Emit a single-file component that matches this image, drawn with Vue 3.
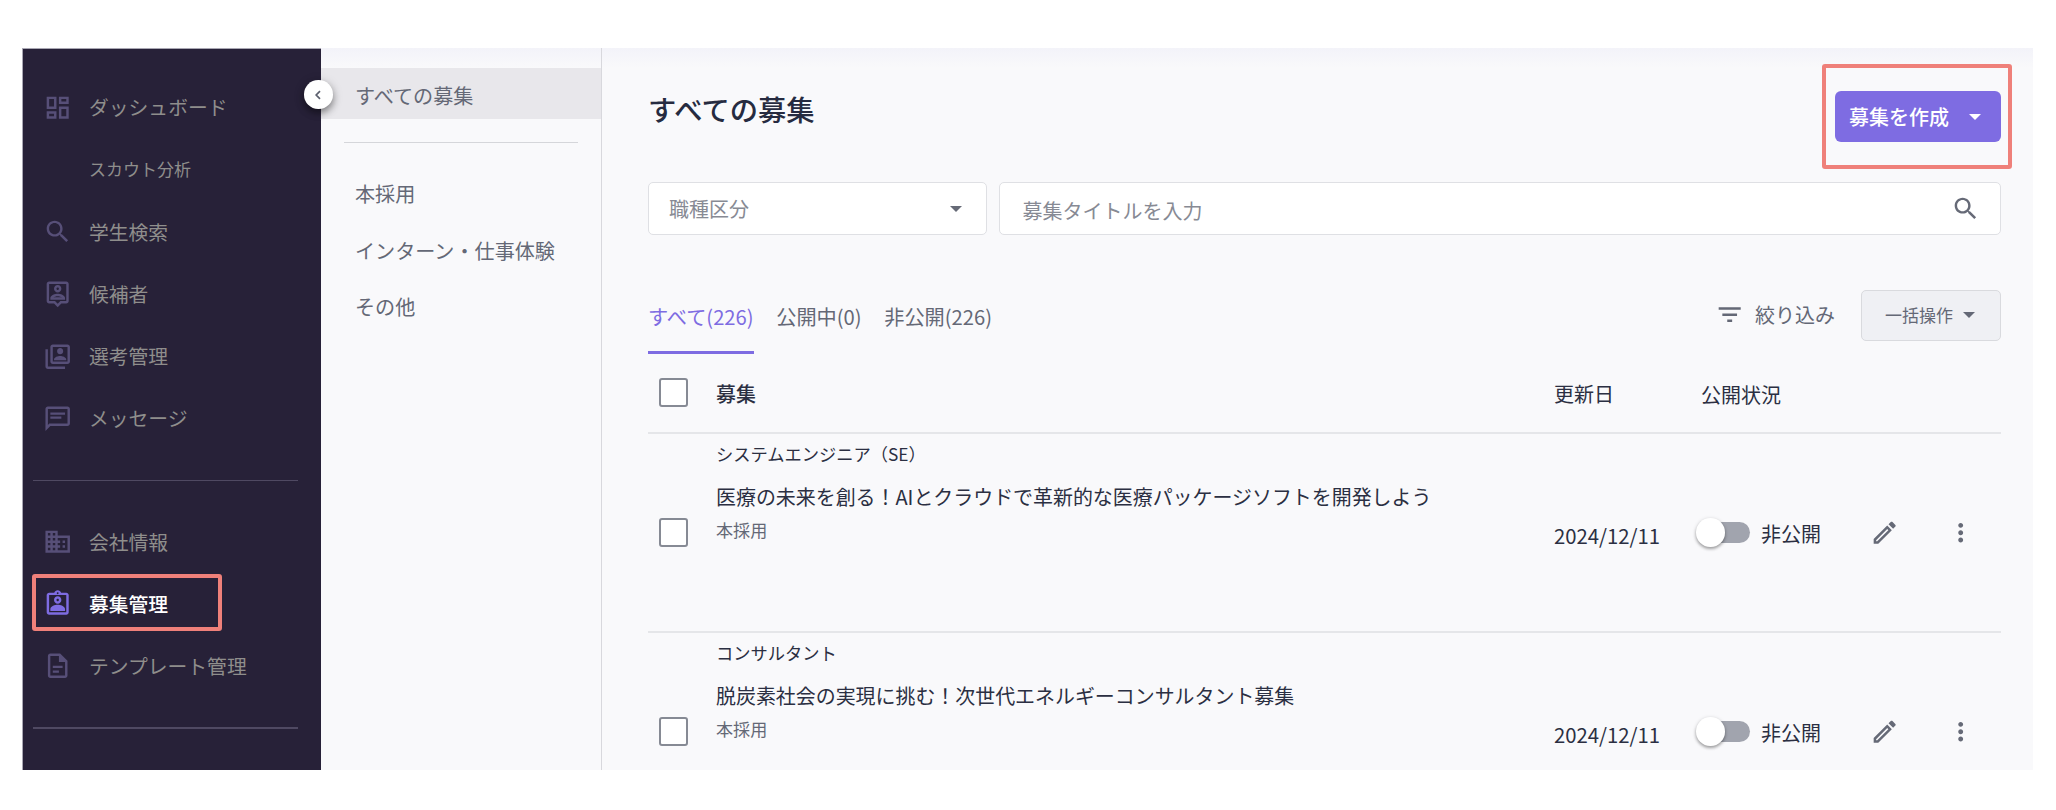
<script setup>
const icons = {
  dashboard: 'M19 5v2h-4V5h4M9 5v6H5V5h4m10 8v6h-4v-6h4M9 17v2H5v-2h4M21 3h-8v6h8V3zM11 3H3v10h8V3zm10 8h-8v10h8V11zm-10 4H3v6h8v-6z',
  search: 'M15.5 14h-.79l-.28-.27C15.41 12.59 16 11.11 16 9.5 16 5.91 13.09 3 9.5 3S3 5.91 3 9.5 5.91 16 9.5 16c1.61 0 3.09-.59 4.23-1.57l.27.28v.79l5 4.99L20.49 19l-4.99-5zm-6 0C7.01 14 5 11.99 5 9.5S7.01 5 9.5 5 14 7.01 14 9.5 11.99 14 9.5 14z',
  candidate: 'M19 2H5c-1.1 0-2 .9-2 2v14c0 1.1.9 2 2 2h4l3 3 3-3h4c1.1 0 2-.9 2-2V4c0-1.1-.9-2-2-2zm0 16h-4.83l-.59.59L12 20.17l-1.59-1.59-.58-.58H5V4h14v14zM12 11c1.65 0 3-1.35 3-3s-1.35-3-3-3-3 1.35-3 3 1.35 3 3 3zm0-4c.55 0 1 .45 1 1s-.45 1-1 1-1-.45-1-1 .45-1 1-1zm6 8.58c0-2.5-3.97-3.58-6-3.58s-6 1.08-6 3.58V17h12v-1.42zM8.48 15c.74-.51 2.23-1 3.52-1s2.79.49 3.52 1H8.48z',
  selection: 'M4 6H2v14c0 1.1.9 2 2 2h14v-2H4V6zm16-4H8c-1.1 0-2 .9-2 2v12c0 1.1.9 2 2 2h12c1.1 0 2-.9 2-2V4c0-1.1-.9-2-2-2zm0 14H8V4h12v12zm-6-6c1.38 0 2.5-1.12 2.5-2.5S15.38 5 14 5s-2.5 1.12-2.5 2.5S12.62 10 14 10zm5 4.5c0-2.1-3.3-3-5-3s-5 .9-5 3v.5h10v-.5z',
  message: 'M4 4h16v12H5.17L4 17.17V4m0-2c-1.1 0-1.99.9-1.99 2L2 22l4-4h14c1.1 0 2-.9 2-2V4c0-1.1-.9-2-2-2H4zm2 8.200h9v1.800H6v-1.800zm0-3.200h12v1.800H6V7z',
  company: 'M12 7V3H2v18h20V7H12zM6 19H4v-2h2v2zm0-4H4v-2h2v2zm0-4H4V9h2v2zm0-4H4V5h2v2zm4 12H8v-2h2v2zm0-4H8v-2h2v2zm0-4H8V9h2v2zm0-4H8V5h2v2zm10 12h-8v-2h2v-2h-2v-2h2v-2h-2V9h8v10zm-2-8h-2v2h2v-2zm0 4h-2v2h2v-2z',
  job: 'M19 3h-4.18C14.4 1.84 13.3 1 12 1s-2.4.84-2.82 2H5c-1.1 0-2 .9-2 2v14c0 1.1.9 2 2 2h14c1.1 0 2-.9 2-2V5c0-1.1-.9-2-2-2zm-7-.25c.41 0 .75.34.75.75s-.34.75-.75.75-.75-.34-.75-.75.34-.75.75-.75zM19 19H5V5h14v14zM12 6c-1.65 0-3 1.35-3 3s1.35 3 3 3 3-1.35 3-3-1.35-3-3-3zm0 4c-.55 0-1-.45-1-1s.45-1 1-1 1 .45 1 1-.45 1-1 1zm-6 6.47V18h12v-1.53c0-2.5-3.97-3.58-6-3.58s-6 1.07-6 3.58z',
  template: 'M14 2H6c-1.1 0-2 .9-2 2v16c0 1.1.89 2 1.99 2H18c1.1 0 2-.9 2-2V8l-6-6zM6 20V4h7v5h5v11H6zm2-4h5v1.8H8V16zm0-4h8v1.8H8V12z',
  filter: 'M10 18h4v-2h-4v2zM3 6v2h18V6H3zm3 7h12v-2H6v2z',
  edit: 'M14.06 9.02l.92.92L5.92 19H5v-.92l9.06-9.06M17.66 3c-.25 0-.51.1-.7.29l-1.83 1.83 3.75 3.75 1.83-1.83c.39-.39.39-1.02 0-1.41l-2.34-2.34c-.2-.2-.45-.29-.71-.29zm-3.6 3.19L3 17.25V21h3.75L17.81 9.94l-3.75-3.75z',
  more: 'M12 8c1.1 0 2-.9 2-2s-.9-2-2-2-2 .9-2 2 .9 2 2 2zm0 2c-1.1 0-2 .9-2 2s.9 2 2 2 2-.9 2-2-.9-2-2-2zm0 6c-1.1 0-2 .9-2 2s.9 2 2 2 2-.9 2-2-.9-2-2-2z',
}

const primaryNav = [
  { label: 'ダッシュボード', icon: 'dashboard' },
  { label: 'スカウト分析', sub: true },
  { label: '学生検索', icon: 'search' },
  { label: '候補者', icon: 'candidate' },
  { label: '選考管理', icon: 'selection' },
  { label: 'メッセージ', icon: 'message' },
]
const settingsNav = [
  { label: '会社情報', icon: 'company' },
  { label: '募集管理', icon: 'job', active: true },
  { label: 'テンプレート管理', icon: 'template' },
]
const categories = ['本採用', 'インターン・仕事体験', 'その他']
const tabs = ['すべて(226)', '公開中(0)', '非公開(226)']
const jobs = [
  { category: 'システムエンジニア（SE）', title: '医療の未来を創る！AIとクラウドで革新的な医療パッケージソフトを開発しよう', type: '本採用', date: '2024/12/11' },
  { category: 'コンサルタント', title: '脱炭素社会の実現に挑む！次世代エネルギーコンサルタント募集', type: '本採用', date: '2024/12/11' },
]
</script>

<template>
  <div class="page">
    <div class="app">
      <nav class="sidebar">
        <div v-for="n in primaryNav" :key="n.label" class="nav-item" :class="{ sub: n.sub }">
          <span class="nav-icon"><svg v-if="n.icon" class="icon" viewBox="0 0 24 24"><path :d="icons[n.icon]" /></svg></span>
          <span>{{ n.label }}</span>
        </div>
        <div class="nav-rule"></div>
        <div v-for="n in settingsNav" :key="n.label" class="nav-item" :class="{ active: n.active }">
          <span class="nav-icon"><svg class="icon" viewBox="0 0 24 24"><path :d="icons[n.icon]" /></svg></span>
          <span>{{ n.label }}</span>
          <i v-if="n.active" class="callout nav-callout"></i>
        </div>
        <div class="nav-rule"></div>
        <button class="collapse" aria-label="collapse">
          <svg viewBox="0 0 8 10"><path d="M6 1.200L2.200 5 6 8.800" /></svg>
        </button>
      </nav>

      <aside class="panel">
        <div class="panel-item selected">すべての募集</div>
        <div class="panel-rule"></div>
        <div v-for="c in categories" :key="c" class="panel-item">{{ c }}</div>
      </aside>

      <main class="main">
        <header class="head">
          <h1>すべての募集</h1>
          <div class="create-wrap">
            <button class="create"><span>募集を作成</span><i class="caret"></i></button>
            <i class="callout create-callout"></i>
          </div>
        </header>

        <div class="filters">
          <div class="field select"><span>職種区分</span><i class="caret"></i></div>
          <div class="field query"><span>募集タイトルを入力</span><svg class="icon" viewBox="0 0 24 24"><path :d="icons.search" /></svg></div>
        </div>

        <div class="toolbar">
          <div class="tabs">
            <div v-for="(t, i) in tabs" :key="t" class="tab" :class="{ on: i === 0 }">{{ t }}</div>
          </div>
          <div class="tools">
            <svg class="icon" viewBox="0 0 24 24"><path :d="icons.filter" /></svg>
            <span class="narrow">絞り込み</span>
            <button class="bulk"><span>一括操作</span><i class="caret"></i></button>
          </div>
        </div>

        <div class="row thead">
          <span class="check"></span>
          <span class="name">募集</span>
          <span class="updated">更新日</span>
          <span class="status-head">公開状況</span>
        </div>
        <div v-for="j in jobs" :key="j.title" class="row job">
          <span class="check"></span>
          <div class="info">
            <div class="cat">{{ j.category }}</div>
            <div class="title">{{ j.title }}</div>
            <div class="type">{{ j.type }}</div>
          </div>
          <span class="date">{{ j.date }}</span>
          <div class="status"><span class="switch"><i></i></span><span>非公開</span></div>
          <svg class="icon" viewBox="0 0 24 24"><path :d="icons.edit" /></svg>
          <svg class="icon" viewBox="0 0 24 24"><path :d="icons.more" /></svg>
        </div>
      </main>
    </div>
  </div>
</template>

<style>
body { background: #fff; }
</style>

<style scoped>
* { box-sizing: border-box; }
.page {
  height: 810px;
  padding: 48px 23px 40px 22px;
  font-family: "Noto Sans CJK JP", sans-serif;
  font-size: 20px;
  line-height: 30px;
  color: #2b2f42;
  white-space: nowrap;
  overflow: hidden;
}
.app { display: flex; height: 722px; overflow: hidden; background: #f9f9fb; }
button { font: inherit; padding: 0; border: 0; }
.icon { display: block; width: 29.4px; height: 29.4px; fill: currentColor; flex: none; }
.caret { width: 0; height: 0; border: 6.400px solid transparent; border-top-color: currentColor; border-bottom: 0; }
.callout { position: absolute; border: 4px solid #ef807a; border-radius: 3px; }

.sidebar {
  position: relative;
  z-index: 1;
  flex: none;
  width: 299px;
  padding-top: 27.400px;
  background: #272138;
  border-left: 1px solid #a9a7b3;
  border-top: 1px solid #a9a7b3;
  font-size: 19.800px;
}
.nav-item { position: relative; display: flex; align-items: center; height: 62.200px; color: #8f8e8c; }
.nav-icon { width: 46px; margin-left: 20px; color: #574f78; }
.sub { font-size: 17px; padding-bottom: 1px; }
.active { color: #fff; font-weight: 500; }
.active .nav-icon { color: #7e6ce2; }
.nav-callout { left: 9px; top: 1.400px; width: 190px; height: 57px; }
.nav-rule { height: 1.500px; margin: 30px 23px 29.600px 10px; background: #4f4962; }
.collapse {
  position: absolute;
  right: -11.500px;
  top: 31px;
  display: flex;
  align-items: center;
  justify-content: center;
  width: 28.500px;
  height: 28.500px;
  border-radius: 50%;
  background: #fff;
  box-shadow: 0 4px 7px rgba(0, 0, 0, .38), 0 2px 12px rgba(0, 0, 0, .16);
}
.collapse svg { width: 8px; height: 10px; margin-top: 2px; fill: none; stroke: #5c606e; stroke-width: 1.700; }

.panel {
  flex: none;
  width: 281px;
  padding-top: 20px;
  border-right: 1px solid #d8d8dd;
  background: linear-gradient(#f3f3f9, #f9f9fb 20px);
  color: #646876;
  font-size: 20.100px;
}
.panel-item { display: flex; align-items: center; height: 56.600px; padding-left: 34px; }
.panel-item.selected { height: 51px; padding-top: 5px; background: #e8e7eb; }
.panel-rule { height: 1px; margin: 23px 23px 23px; background: #d5d6da; }

.main { flex: 1; padding: 0 32px 0 46px; background: linear-gradient(#f3f3f9, #f9f9fb 20px); }
.head { display: flex; justify-content: space-between; height: 134px; }
h1 { margin: 40px 0 0; font-size: 28.300px; line-height: 42px; font-weight: 500; color: #262b40; }
.create-wrap { position: relative; height: 51px; margin-top: 43px; }
.create {
  display: flex;
  align-items: center;
  gap: 20px;
  width: 166px;
  height: 51px;
  padding-left: 14px;
  border-radius: 6px;
  background: #7e6ce2;
  color: #fff;
  font-weight: 500;
}
.create span { padding-top: 1px; }
.create-callout { left: -13px; top: -27.500px; width: 190px; height: 105px; }

.filters { display: flex; gap: 11.500px; height: 107px; }
.field {
  display: flex;
  align-items: center;
  justify-content: space-between;
  height: 53px;
  border: 1px solid #dfe0e4;
  border-radius: 5px;
  background: #fff;
  color: #878a94;
}
.select { width: 339px; padding: 0 24px 0 20px; }
.query { flex: 1; padding: 0 20px 0 23px; }
.select span { padding-top: 1px; }
.query span { padding-top: 4px; }
.select .caret, .query .icon { color: #666a77; }

.toolbar { display: flex; justify-content: space-between; height: 65px; color: #646876; }
.tabs { display: flex; gap: 22.600px; font-size: 20.200px; }
.tab { padding-top: 13px; }
.tab.on { color: #7e6ce2; border-bottom: 3px solid #7e6ce2; }
.tools { display: flex; align-items: center; height: 51px; margin-top: .500px; }
.narrow { margin: 0 26px 0 10.500px; }
.bulk {
  display: flex;
  align-items: center;
  gap: 10px;
  width: 140px;
  height: 51px;
  padding-left: 23px;
  border: 1px solid #d9dade;
  border-radius: 5px;
  background: #eff0f4;
  color: #646876;
  font-size: 17px;
}

.row {
  display: grid;
  grid-template-columns: 57px 838px 142px 173.500px 76px 1fr;
  align-items: center;
  padding-left: 11px;
  border-bottom: 2px solid #e5e6e9;
}
.check { width: 28.500px; height: 28.500px; border: 2.500px solid #868a94; border-radius: 3px; background: #fff; }
.thead { height: 80px; padding-bottom: 1px; }
.name, .updated { padding-top: 2px; }
.name { font-weight: 500; }
.status-head { margin-left: 5px; padding-top: 4px; }
.job { height: 199px; }
.info { align-self: start; }
.cat { margin-top: 5px; font-size: 17.250px; }
.title { margin-top: 13px; font-size: 19.940px; }
.type { margin-top: 3px; font-size: 17.100px; color: #646876; }
.date { padding-top: 5px; font-size: 20.300px; }
.status { display: flex; align-items: center; gap: 11px; }
.status > span:last-child { padding-top: 2px; }
.switch { position: relative; width: 50px; height: 20.500px; margin-left: 4px; border-radius: 11px; background: #a1a4ae; }
.switch i {
  position: absolute;
  left: -4px;
  top: -4px;
  width: 28.500px;
  height: 28.500px;
  border-radius: 50%;
  background: #fff;
  box-shadow: 0 2px 3px rgba(0, 0, 0, .28), 0 1px 4px rgba(0, 0, 0, .16);
}
.job .icon { color: #666a77; }
</style>
